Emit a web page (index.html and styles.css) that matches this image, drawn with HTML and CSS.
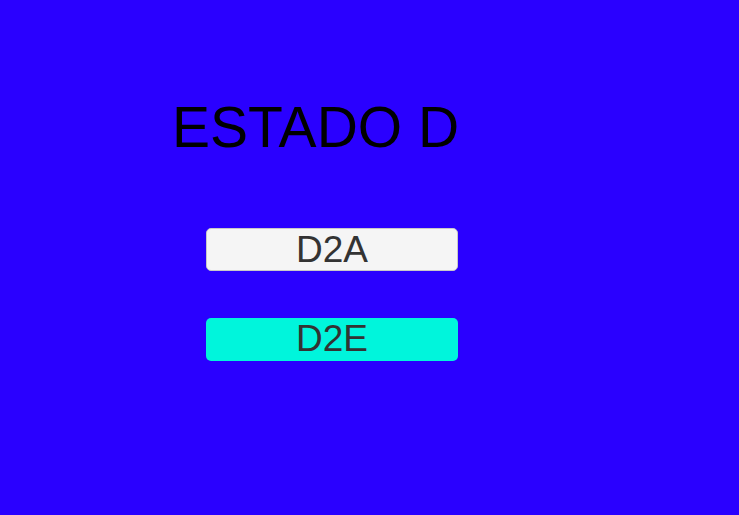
FILE: index.html
```html
<!DOCTYPE html>
<html>
<head>
<meta charset="utf-8">
<link rel="stylesheet" href="styles.css">
</head>
<body>
<main class="screen">
  <h1 class="title">ESTADO D</h1>
  <div class="buttons">
    <button class="btn btn-light">D2A</button>
    <button class="btn btn-cyan">D2E</button>
  </div>
</main>
</body>
</html>
```
FILE: styles.css
```css
html, body {
  margin: 0;
  padding: 0;
}
body {
  background: #2a00ff;
  width: 739px;
  height: 515px;
  overflow: hidden;
  font-family: "Liberation Sans", Arial, sans-serif;
}
.screen {
  display: flex;
  flex-direction: column;
  padding-top: 93px;
}
.title {
  margin: 0 0 0 172px;
  font-weight: normal;
  font-size: 57px;
  line-height: 68px;
  color: #000;
}
.buttons {
  display: flex;
  flex-direction: column;
  gap: 47px;
  margin: 67px 0 0 206px;
}
.btn {
  width: 252px;
  height: 43px;
  border-radius: 5px;
  font-family: "Liberation Sans", Arial, sans-serif;
  font-size: 37px;
  color: #333333;
  padding: 0 0 2px 0;
  line-height: 41px;
  box-sizing: border-box;
}
.btn-light {
  background: #f5f5f5;
  border: 1px solid #c8c8c8;
}
.btn-cyan {
  background: #00f5dc;
  border: none;
}
```
